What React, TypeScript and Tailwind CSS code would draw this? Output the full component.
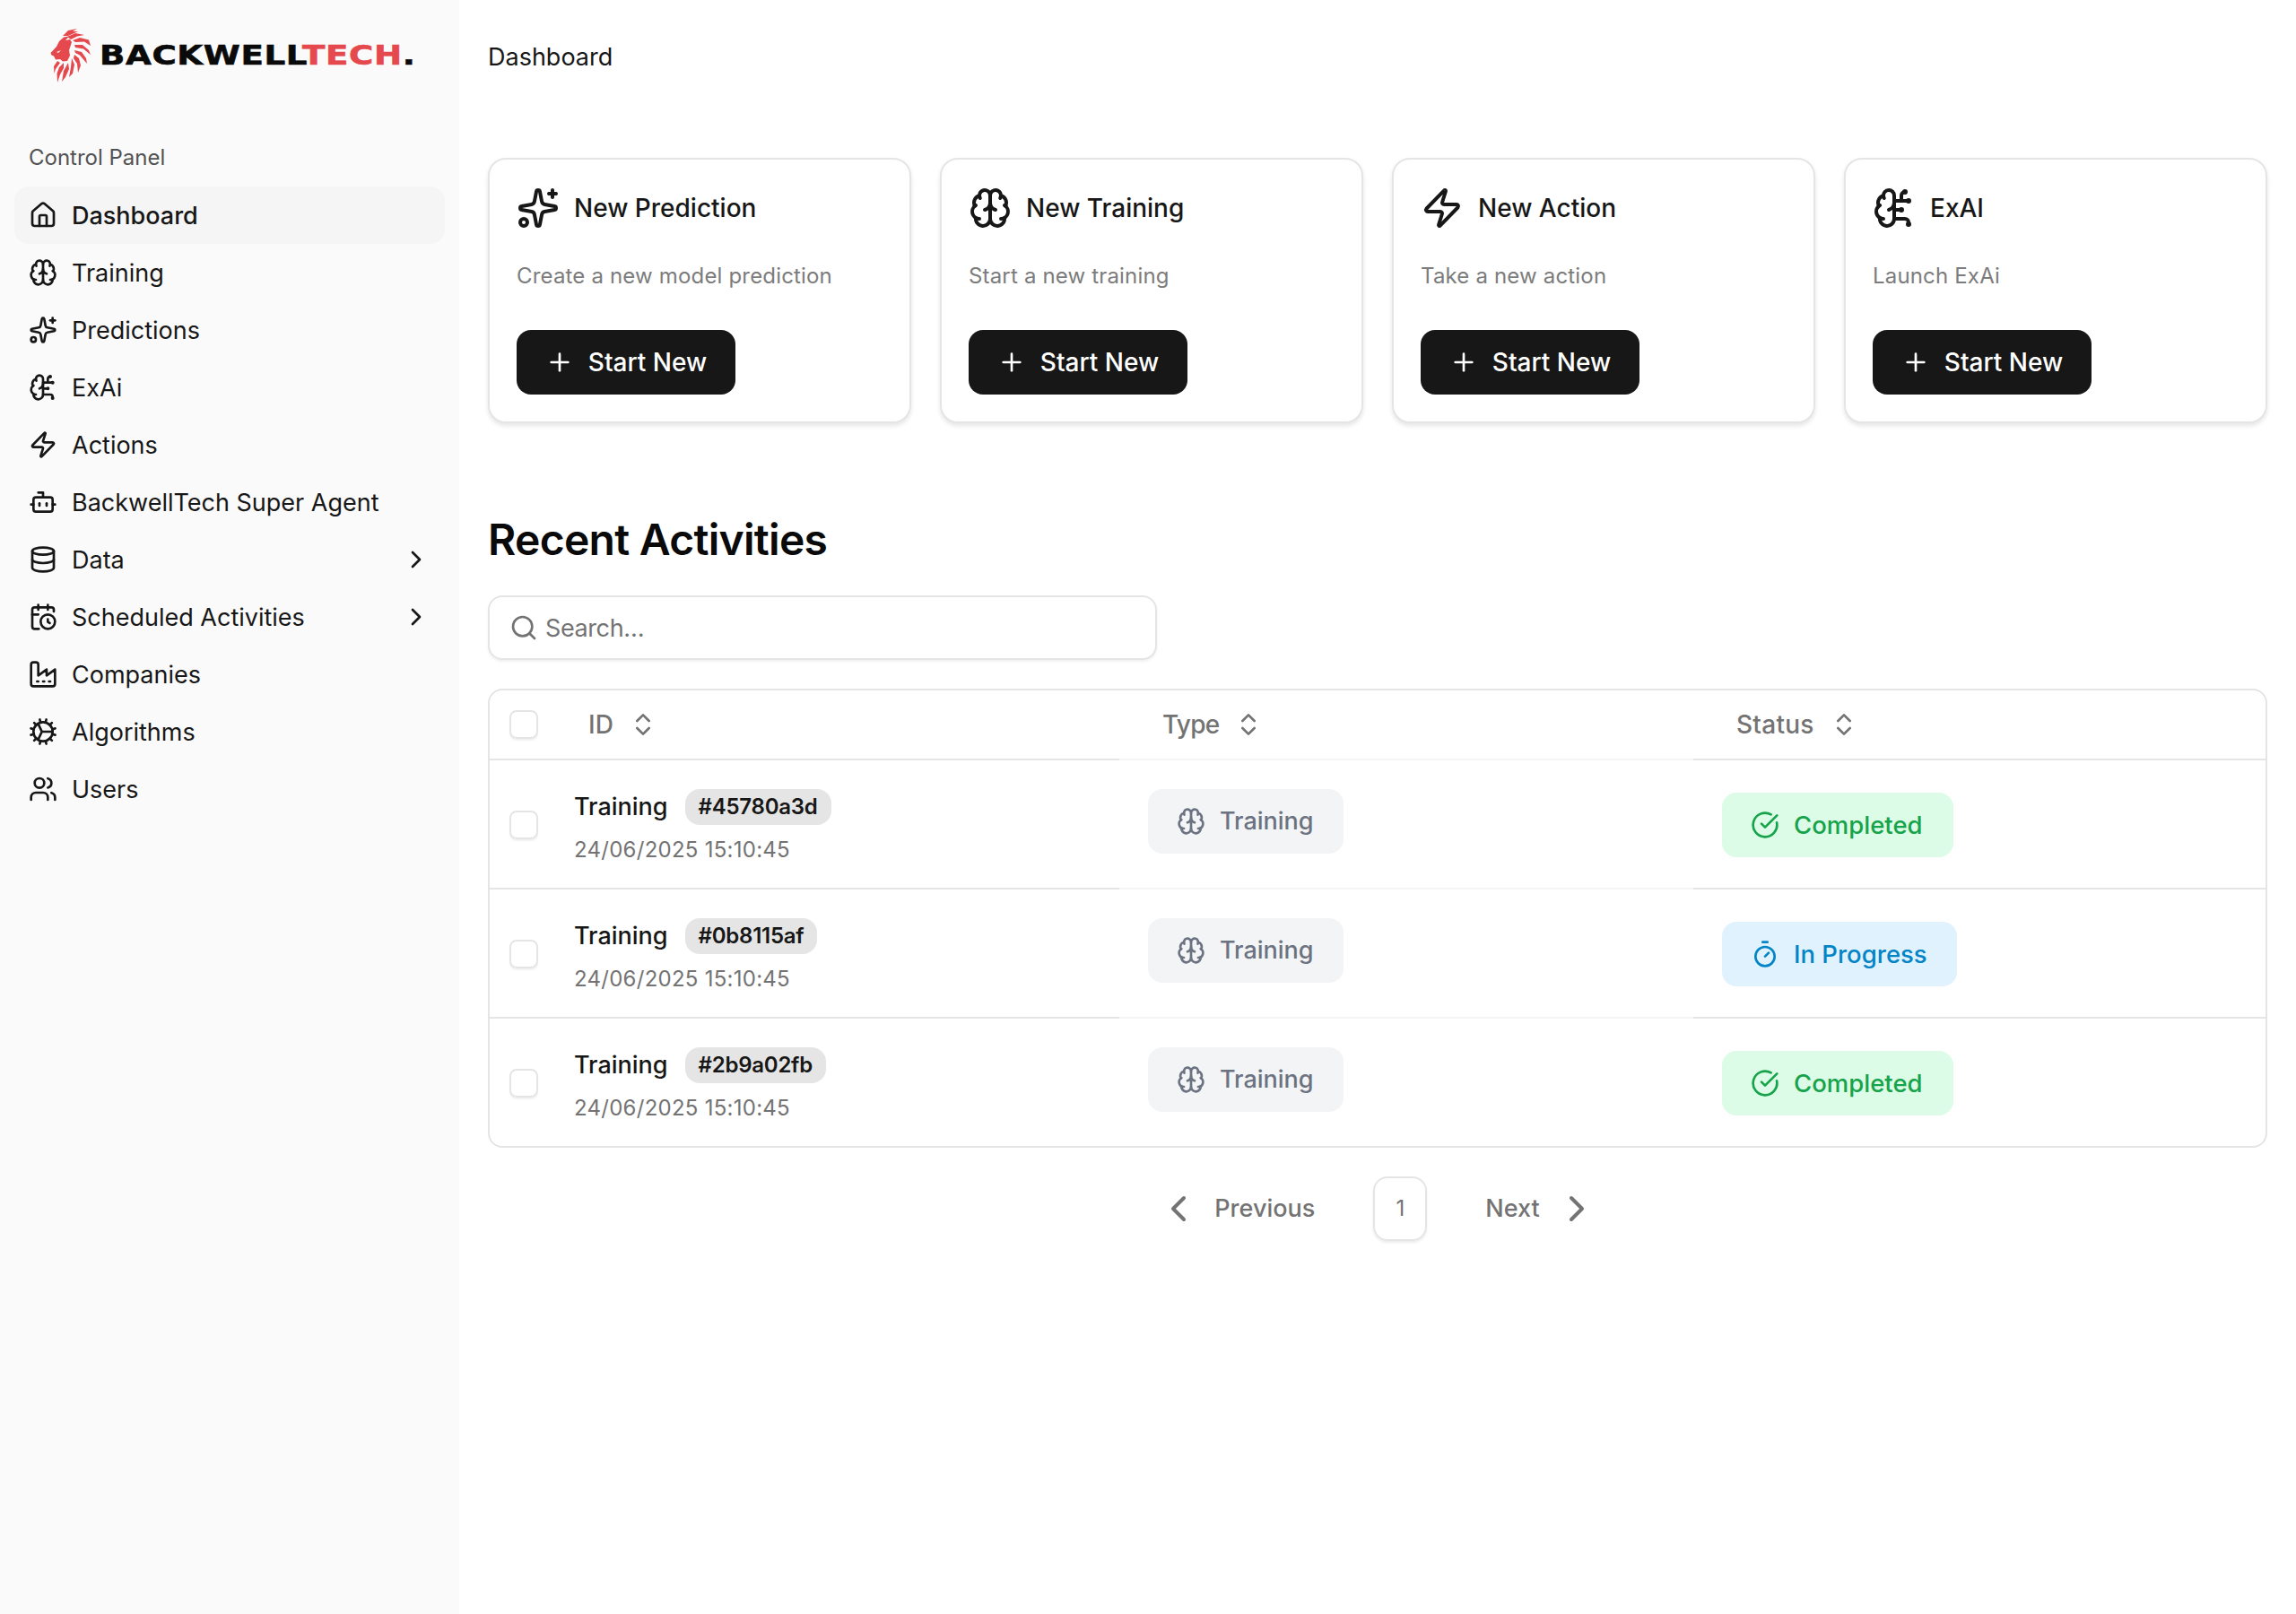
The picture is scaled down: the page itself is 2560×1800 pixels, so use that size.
import React from "react";
import { House, Brain, Sparkles, BrainCircuit, Zap, Bot, Database, CalendarClock, Users, ChevronRight, ChevronLeft, ChevronsUpDown, Plus, Search, CircleCheckBig, Timer } from "lucide-react";

function GearPlay({ className }: { className?: string }) {
  const teeth = Array.from({ length: 12 }, (_, i) => i * 30 + 15);
  return (
    <svg viewBox="0 0 24 24" fill="none" stroke="currentColor" strokeWidth={2} strokeLinecap="round" strokeLinejoin="round" className={className}>
      <circle cx="12" cy="12" r="8" />
      {teeth.map((a) => {
        const r = (a * Math.PI) / 180;
        return <line key={a} x1={12 + 8 * Math.cos(r)} y1={12 + 8 * Math.sin(r)} x2={12 + 10.5 * Math.cos(r)} y2={12 + 10.5 * Math.sin(r)} />;
      })}
      <path d="M8 5.5 11 12 8 18.5M11 12h9" />
    </svg>
  );
}

function FactoryIcon({ className }: { className?: string }) {
  return (
    <svg viewBox="0 0 24 24" fill="none" stroke="currentColor" strokeWidth={2} strokeLinecap="round" strokeLinejoin="round" className={className}>
      <path d="M2 20a2 2 0 0 0 2 2h16a2 2 0 0 0 2-2V8l-7 5V8l-7 5V4a2 2 0 0 0-2-2H4a2 2 0 0 0-2 2Z" />
      <path d="M17 18h1" />
      <path d="M12 18h1" />
      <path d="M7 18h1" />
    </svg>
  );
}

function Lion() {
  return (
    <svg viewBox="0 0 46 60" className="w-[46px] h-[60px]" fill="#e5484d">
      <path d="M0.5 27 7 20 10 14 15 9.5 21 8.5 17 13 22 12 24 15 21 24 22 30 19 36 14 36.5 11 34 6 34.5 4 30.5 1.5 29.5ZM7 26 12 24 9 27Z" fillRule="evenodd" />
      <path d="M14 8 20 2 30 0 25 3 31 3 20 8Z" />
      <path d="M19 9 28 5 38 7 30 8.5 23 12Z" />
      <path d="M25 13 33 10 43 12.5 45 19 38 14.5 28 15Z" />
      <path d="M27 18 36 18 43 24 45 29 37 22.5 28 21Z" />
      <path d="M27 24 35 26 40 33 41 39 33 29.5 28 27Z" />
      <path d="M27 29 32 33 34 41 31 49 30 39 26 33Z" />
      <path d="M24 33 27 40 25 50 21 54 23 43Z" />
      <path d="M20 38 21 45 17 54 13 59 15 47Z" />
      <path d="M15 38 15 44 11 51 8 60 7.5 50 10 43Z" />
      <path d="M8 36 11 38 6 45 4.5 50 4 42Z" />
    </svg>
  );
}

const nav = [
  { label: "Dashboard", icon: House, active: true },
  { label: "Training", icon: Brain },
  { label: "Predictions", icon: Sparkles },
  { label: "ExAi", icon: BrainCircuit },
  { label: "Actions", icon: Zap },
  { label: "BackwellTech Super Agent", icon: Bot },
  { label: "Data", icon: Database, more: true },
  { label: "Scheduled Activities", icon: CalendarClock, more: true },
  { label: "Companies", icon: FactoryIcon },
  { label: "Algorithms", icon: GearPlay },
  { label: "Users", icon: Users },
];

const cards = [
  { title: "New Prediction", desc: "Create a new model prediction", icon: Sparkles },
  { title: "New Training", desc: "Start a new training", icon: Brain },
  { title: "New Action", desc: "Take a new action", icon: Zap },
  { title: "ExAI", desc: "Launch ExAi", icon: BrainCircuit },
];

const rows = [
  { id: "#45780a3d", done: true },
  { id: "#0b8115af", done: false },
  { id: "#2b9a02fb", done: true },
];

const dark = "border-b-2 border-[#e5e5e5]";
const light = "border-b-2 border-[#f5f5f5]";

export default function App() {
  return (
    <div className="flex min-h-screen bg-white text-[#171717] font-['Inter',sans-serif]">
      <aside className="w-[512px] shrink-0 bg-[#fafafa] px-4">
        <div className="h-[160px] pt-[16px] pl-10 flex items-start">
          <div className="flex items-center gap-[9px] mt-[16px]">
            <Lion />
            <span className="font-['DejaVu_Sans',sans-serif] font-bold text-[30px] leading-none tracking-[0.5px] origin-left scale-x-[1.24] whitespace-nowrap text-[#0a0a0a] [-webkit-text-stroke:0.6px_currentColor]">
              BACKWELL<span className="text-[#e5484d]">TECH</span>.
            </span>
          </div>
        </div>
        <div className="h-8 px-4 mb-4 text-[24px] leading-8 text-[#525252]">Control Panel</div>
        <nav className="flex flex-col">
          {nav.map((n) => (
            <div key={n.label} className={`flex items-center h-16 pl-4 pr-4 gap-4 rounded-2xl text-[27px] leading-10 ${n.active ? "bg-[#f5f5f5] font-medium" : ""}`}>
              <n.icon className="w-8 h-8 shrink-0" />
              <span className="flex-1 whitespace-nowrap pt-px">{n.label}</span>
              {n.more && <ChevronRight className="w-8 h-8 shrink-0" />}
            </div>
          ))}
        </nav>
      </aside>

      <main className="flex-1 min-w-0 px-8">
        <header className="h-[128px] flex items-center text-[27px] pt-px">Dashboard</header>
        <section className="mt-12 grid grid-cols-4 gap-8">
          {cards.map((c) => (
            <div key={c.title} className="h-[296px] rounded-[20px] border-2 border-[#e5e5e5] bg-white px-[30px] pt-[30px] shadow-[0_3px_5px_rgba(0,0,0,0.1)]">
              <div className="flex items-center gap-4 h-12">
                <c.icon className="w-12 h-12 shrink-0" />
                <span className="text-[28px] font-medium">{c.title}</span>
              </div>
              <p className="mt-8 text-[24px] leading-10 tracking-[0.17px] text-[#7c7c7c]">{c.desc}</p>
              <button className="mt-10 h-[72px] w-[244px] rounded-2xl bg-[#171717] text-white flex items-center justify-center gap-4 text-[28px] font-medium">
                <Plus className="w-8 h-8" />
                Start New
              </button>
            </div>
          ))}
        </section>

        <h2 className="mt-[98px] h-16 text-[48px] leading-16 font-semibold tracking-[-0.015em] text-[#0a0a0a]">Recent Activities</h2>

        <div className="mt-[30px] h-[72px] w-[746px] rounded-2xl border-2 border-[#e5e5e5] bg-white shadow-[0_2px_3px_rgba(0,0,0,0.06)] flex items-center gap-2 pl-[22px] text-[27px] tracking-[-0.4px] text-[#737373]">
          <Search className="w-8 h-8" />
          <span className="pt-0.5">Search…</span>
        </div>

        <div className="mt-8 rounded-2xl border-2 border-[#e5e5e5] overflow-hidden grid grid-cols-[702px_640px_1fr]">
          <div className={`${dark} h-[78px] flex items-center pl-[22px]`}>
            <span className="w-8 h-8 rounded-lg border-2 border-[#e5e5e5] shadow-[0_2px_2px_rgba(0,0,0,0.06)]" />
            <div className="ml-[56px] flex items-center gap-[17px] text-[28px] font-medium text-[#737373]">
              ID <ChevronsUpDown className="w-8 h-8" strokeWidth={2} />
            </div>
          </div>
          <div className={`${light} flex items-center pl-12 text-[28px] tracking-[-0.7px] font-medium text-[#737373] gap-4`}>
            Type <ChevronsUpDown className="w-8 h-8" />
          </div>
          <div className={`${dark} flex items-center pl-12 text-[28px] tracking-[0.25px] font-medium text-[#737373] gap-[17px]`}>
            Status <ChevronsUpDown className="w-8 h-8" />
          </div>

          {rows.map((r, i) => {
            const last = i === rows.length - 1;
            return (
              <React.Fragment key={r.id}>
                <div className={`${last ? "h-[142px]" : `h-[144px] ${dark}`} flex items-center pl-[22px]`}>
                  <span className="w-8 h-8 rounded-lg border-2 border-[#e5e5e5] shadow-[0_2px_2px_rgba(0,0,0,0.06)] mt-0.5" />
                  <div className="ml-10 self-start pt-8">
                    <div className="flex items-center gap-[19px] h-10">
                      <span className="text-[27px] font-medium text-[#171717] pt-px">Training</span>
                      <span className="h-10 px-[15px] rounded-2xl bg-[#e5e5e5] flex items-center text-[24px] tracking-[-0.25px] font-semibold text-[#171717]">{r.id}</span>
                    </div>
                    <div className="mt-[10px] text-[24px] leading-9 tracking-[0.26px] text-[#737373]">24/06/2025 15:10:45</div>
                  </div>
                </div>
                <div className={`${last ? "" : light} pl-8 pt-8`}>
                  <div className="inline-flex items-center h-[72px] w-[218px] pl-8 gap-4 rounded-2xl bg-[#f3f4f6] text-[27px] font-medium text-[#6b7280]">
                    <Brain className="w-8 h-8" />
                    <span className="pt-px">Training</span>
                  </div>
                </div>
                <div className={`${last ? "" : dark} pl-8 pt-9`}>
                  {r.done ? (
                    <div className="inline-flex items-center h-[72px] w-[258px] pl-8 gap-4 rounded-2xl bg-[#dcfce7] text-[27.5px] font-medium text-[#16a34a]">
                      <CircleCheckBig className="w-8 h-8" />
                      <span className="pt-px">Completed</span>
                    </div>
                  ) : (
                    <div className="inline-flex items-center h-[72px] w-[262px] pl-8 gap-4 rounded-2xl bg-[#e0f2fe] text-[27.5px] font-medium text-[#0284c7]">
                      <Timer className="w-8 h-8" />
                      <span className="pt-px">In Progress</span>
                    </div>
                  )}
                </div>
              </React.Fragment>
            );
          })}
        </div>

        <div className="mt-8 flex items-center justify-center text-[27px] font-medium text-[#737373] h-[72px]">
          <ChevronLeft className="w-12 h-12" />
          <span className="ml-4 pt-px">Previous</span>
          <span className="ml-[65px] w-[60px] h-[72px] rounded-2xl border-2 border-[#e5e5e5] shadow-[0_2px_3px_rgba(0,0,0,0.08)] flex items-center justify-center text-[24px] font-normal">1</span>
          <span className="ml-[65px] pt-px">Next</span>
          <ChevronRight className="ml-[17px] w-12 h-12" />
        </div>
      </main>
    </div>
  );
}
